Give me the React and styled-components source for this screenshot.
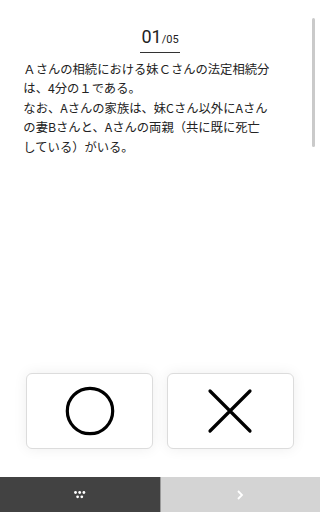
import React from 'react';
import styled, { createGlobalStyle } from 'styled-components';

const GlobalStyle = createGlobalStyle`
  html, body {
    margin: 0;
    padding: 0;
    background: #ffffff;
  }
  body {
    font-family: "Noto Sans CJK JP", "Noto Sans", sans-serif;
  }
`;

const Screen = styled.div`
  position: relative;
  display: flex;
  flex-direction: column;
  height: 100vh;
  overflow: hidden;
  background: #fff;
`;

const Content = styled.div`
  flex: 1;
  display: flex;
  flex-direction: column;
  align-items: center;
  padding: 27px 7.3% 0;
`;

const Counter = styled.div`
  display: inline-flex;
  align-items: baseline;
  padding: 0 1px 2px;
  border-bottom: 1.5px solid #333;
  line-height: 20px;
  color: #222;
  font-family: Roboto, "Liberation Sans", sans-serif;
`;

const Current = styled.span`
  font-size: 18px;
`;

const Total = styled.span`
  font-size: 11px;
`;

const Question = styled.p`
  align-self: stretch;
  margin: 7px 0 0;
  font-size: 12.3px;
  line-height: 19.4px;
  color: #222;
`;

const ScrollThumb = styled.div`
  position: absolute;
  top: 18px;
  right: 5px;
  width: 3px;
  height: 129px;
  border-radius: 2px;
  background: #cacaca;
`;

const Answers = styled.div`
  display: grid;
  grid-template-columns: 1fr 1fr;
  gap: 4.9%;
  padding: 0 8%;
  margin-bottom: 28px;
`;

const AnswerButton = styled.button`
  height: 76px;
  display: flex;
  align-items: center;
  justify-content: center;
  background: #fff;
  border: 1px solid #dcdcdc;
  border-radius: 6px;
  box-shadow: 0 0 14px rgba(0, 0, 0, 0.07);
  padding: 0;
`;

const Footer = styled.div`
  display: grid;
  grid-template-columns: 1fr 1fr;
  height: 35px;
  gap: 1px;
  background: #9a9a9a;
`;

const FooterCell = styled.div`
  display: flex;
  align-items: center;
  justify-content: center;
  background: ${(p) => (p.$dark ? '#424242' : '#d4d4d4')};
`;

const Circle = () => (
  <svg width="50" height="50" viewBox="0 0 50 50">
    <circle cx="25" cy="25" r="22.7" fill="none" stroke="#000" strokeWidth="3.2" />
  </svg>
);

const Cross = () => (
  <svg width="46" height="46" viewBox="0 0 46 46">
    <path d="M3 3 L43 43 M43 3 L3 43" stroke="#000" strokeWidth="3.2" strokeLinecap="round" />
  </svg>
);

const Dots = () => (
  <svg width="12" height="8" viewBox="0 0 12 8">
    <g fill="#fff">
      <circle cx="1.5" cy="1.5" r="1.4" />
      <circle cx="5.7" cy="1.5" r="1.4" />
      <circle cx="9.9" cy="1.5" r="1.4" />
      <circle cx="3.6" cy="5.8" r="1.4" />
      <circle cx="7.8" cy="5.8" r="1.4" />
    </g>
  </svg>
);

const Chevron = () => (
  <svg width="8" height="10" viewBox="0 0 8 10">
    <path d="M2 1 L6 5 L2 9" fill="none" stroke="#fff" strokeWidth="1.8" />
  </svg>
);

export default function App() {
  return (
    <Screen>
      <GlobalStyle />
      <Content>
        <Counter>
          <Current>01</Current>
          <Total>/05</Total>
        </Counter>
        <Question>
          Ａさんの相続における妹Ｃさんの法定相続分
          <br />
          は、4分の１である。
          <br />
          なお、Aさんの家族は、妹Cさん以外にAさん
          <br />
          の妻Bさんと、Aさんの両親（共に既に死亡
          <br />
          している）がいる。
        </Question>
      </Content>
      <ScrollThumb />
      <Answers>
        <AnswerButton aria-label="まる">
          <Circle />
        </AnswerButton>
        <AnswerButton aria-label="ばつ">
          <Cross />
        </AnswerButton>
      </Answers>
      <Footer>
        <FooterCell $dark>
          <Dots />
        </FooterCell>
        <FooterCell>
          <Chevron />
        </FooterCell>
      </Footer>
    </Screen>
  );
}
